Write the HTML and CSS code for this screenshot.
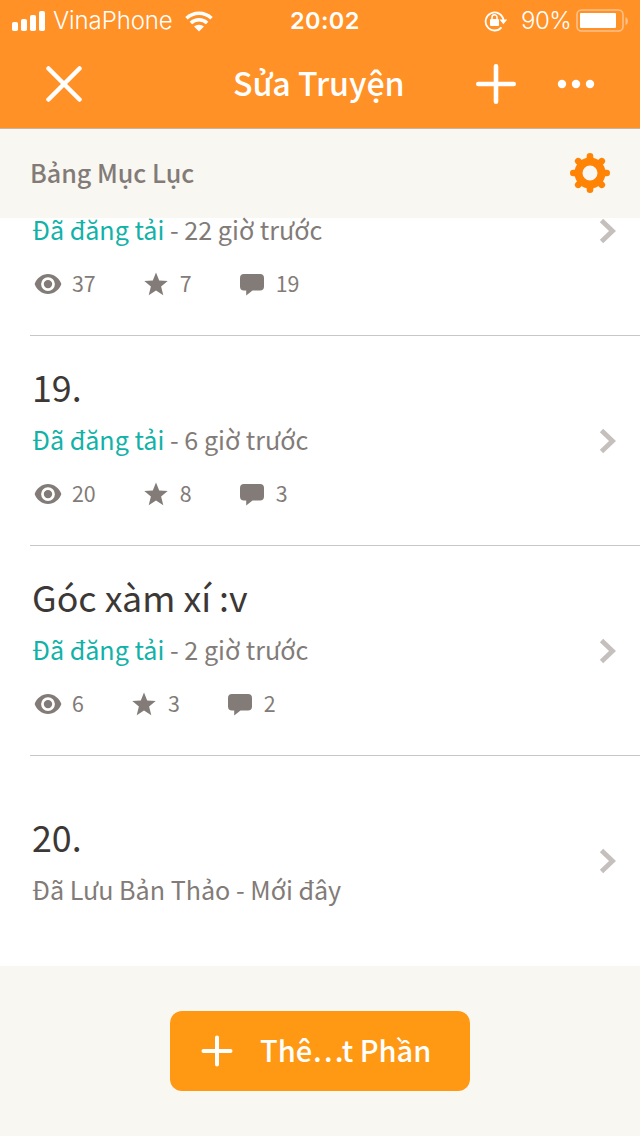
FILE: index.html
```html
<!DOCTYPE html>
<html lang="vi">
<head>
<meta charset="utf-8">
<title>Sửa Truyện</title>
<link rel="stylesheet" href="styles.css">
</head>
<body>
<svg class="defs" width="0" height="0" aria-hidden="true">
  <symbol id="eye" viewBox="0 0 28 22"><path fill-rule="evenodd" d="M14 1C8 1 3.200 5 .9 10.200q-.4.8 0 1.600C3.200 17 8 21 14 21s10.800-4 13.100-9.200q.4-.8 0-1.600C24.800 5 20 1 14 1Zm0 3.200a6.900 6.900 0 1 1 0 13.800a6.900 6.900 0 1 1 0-13.800Zm0 2.700a4.200 4.200 0 1 0 0 8.400a4.200 4.200 0 1 0 0-8.400Z"/></symbol>
  <symbol id="star" viewBox="0 0 24 24"><path d="M12 .5l3.200 8.100 8.500.4-6.600 5.500 2.200 8.700L12 18.400l-7.300 4.800 2.200-8.700L.3 9l8.500-.4Z"/></symbol>
  <symbol id="comment" viewBox="0 0 24 22"><path d="M4 0H20Q24 0 24 4V12.500Q24 16.500 20 16.500H12.500L6.200 21.500V16.500H4Q0 16.500 0 12.500V4Q0 0 4 0Z"/></symbol>
  <symbol id="chevron" viewBox="0 0 18 26"><path d="M2.500 2.500L13.500 13L2.500 23.500" fill="none" stroke="#c5c0bd" stroke-width="4.800"/></symbol>
</svg>
<div class="screen">
  <header class="header">
    <div class="statusbar">
      <div class="carrier">
        <svg width="34" height="20" viewBox="0 0 34 20"><rect y="11" width="6" height="9" rx="1.800"/><rect x="9" y="8" width="6" height="12" rx="1.800"/><rect x="18" y="4" width="6" height="16" rx="1.800"/><rect x="27" width="6" height="20" rx="1.800"/></svg>
        <span class="carrier-name">VinaPhone</span>
        <svg class="wifi" width="28" height="21" viewBox="0 0 28 21"><path d="M1.500 7.200A18 18 0 0 1 26.500 7.200M5.900 12A11.700 11.700 0 0 1 22.100 12" fill="none" stroke="#fff" stroke-width="3.500"/><path d="M14 20.500L9 15.600A7.500 7.500 0 0 1 19 15.600Z"/></svg>
      </div>
      <div class="clock">20:02</div>
      <div class="power">
        <svg class="lock" width="24" height="22" viewBox="0 0 24 22"><path d="M17.500 17.300A9 9 0 1 1 19.500 10" fill="none" stroke="#fff" stroke-width="1.800"/><path d="M15.500 9.500H23.200L19.400 14.200Z"/><rect x="6" y="9" width="9" height="7" rx="1"/><path d="M8 10V7.200a2.500 2.500 0 0 1 5 0V10" fill="none" stroke="#fff" stroke-width="1.500"/></svg>
        <span class="percent">90%</span>
        <svg width="54" height="24" viewBox="0 0 54 24"><rect x="2" y="1" width="46" height="21" rx="4.500" fill="none" stroke="#ffc18b" stroke-width="1.600"/><rect x="5" y="4" width="36" height="15" rx="1"/><path d="M50.500 8q2.500 1 2.500 4t-2.500 4Z" fill="#ffc18b"/></svg>
      </div>
    </div>
    <nav class="navbar">
      <svg class="close" width="36" height="36" viewBox="0 0 36 36"><path d="M2.500 2.500L33.500 33.500M33.500 2.500L2.500 33.500" fill="none" stroke="#fff" stroke-width="4.500" stroke-linecap="round"/></svg>
      <h1 class="title">Sửa Truyện</h1>
      <svg class="add" width="40" height="40" viewBox="0 0 40 40"><path d="M20 2.300V37.700M2.300 20H37.700" fill="none" stroke="#fff" stroke-width="4.600" stroke-linecap="round"/></svg>
      <svg class="more" width="38" height="10" viewBox="0 0 38 10"><circle cx="5" cy="5" r="4.200"/><circle cx="19" cy="5" r="4.200"/><circle cx="33" cy="5" r="4.200"/></svg>
    </nav>
  </header>
  <div class="section">
    <h2 class="section-title">Bảng Mục Lục</h2>
    <svg class="gear" width="40" height="40" viewBox="-20 -20 40 40">
      <path d="M0-13V-16.700M0 13V16.700M-13 0H-16.700M13 0H16.700M9-9L11.800-11.800M-9-9L-11.800-11.800M9 9L11.800 11.800M-9 9L-11.800 11.800" stroke="#ff8305" stroke-width="6.600" stroke-linecap="round"/>
      <circle r="11.500" fill="none" stroke="#ff8305" stroke-width="8"/>
    </svg>
  </div>
  <main class="list">
    <article class="row row-cut">
      <div class="info">
        <p class="status"><span class="published">Đã đăng tải</span> - 22 giờ trước</p>
        <div class="stats"><svg class="eye"><use href="#eye"/></svg><span>37</span><svg class="star"><use href="#star"/></svg><span>7</span><svg class="comment"><use href="#comment"/></svg><span>19</span></div>
      </div>
      <svg class="chevron"><use href="#chevron"/></svg>
    </article>
    <article class="row">
      <div class="info">
        <h3 class="name">19.</h3>
        <p class="status"><span class="published">Đã đăng tải</span> - 6 giờ trước</p>
        <div class="stats"><svg class="eye"><use href="#eye"/></svg><span>20</span><svg class="star"><use href="#star"/></svg><span>8</span><svg class="comment"><use href="#comment"/></svg><span>3</span></div>
      </div>
      <svg class="chevron"><use href="#chevron"/></svg>
    </article>
    <article class="row">
      <div class="info">
        <h3 class="name">Góc xàm xí :v</h3>
        <p class="status"><span class="published">Đã đăng tải</span> - 2 giờ trước</p>
        <div class="stats"><svg class="eye"><use href="#eye"/></svg><span>6</span><svg class="star"><use href="#star"/></svg><span>3</span><svg class="comment"><use href="#comment"/></svg><span>2</span></div>
      </div>
      <svg class="chevron"><use href="#chevron"/></svg>
    </article>
    <article class="row row-draft">
      <div class="info">
        <h3 class="name">20.</h3>
        <p class="status">Đã Lưu Bản Thảo - Mới đây</p>
      </div>
      <svg class="chevron"><use href="#chevron"/></svg>
    </article>
  </main>
  <footer class="footer">
    <button class="new-part"><svg width="32" height="32" viewBox="0 0 32 32"><path d="M16 2.500V29.500M2.500 16H29.500" fill="none" stroke="#fff" stroke-width="4" stroke-linecap="round"/></svg><span>Thê…t Phần</span></button>
  </footer>
</div>
</body>
</html>
```
FILE: styles.css
```css
* { box-sizing: border-box; margin: 0; padding: 0; }
body { font-family: "Noto Sans CJK SC", "Noto Sans", sans-serif; background: #fff; }
svg { display: block; flex: none; fill: #fff; }
.defs { position: absolute; }
.screen { width: 640px; height: 1136px; display: flex; flex-direction: column; overflow: hidden; white-space: nowrap; }

.header { height: 129px; flex: none; background: #ff9126; color: #fff; border-bottom: 1px solid #c9b59f; }
.statusbar { height: 40px; display: grid; grid-template-columns: 278px 70px 1fr; align-items: center; padding: 1px 11px 0 12px; font-family: Inter, "Liberation Sans", sans-serif; font-size: 24px; line-height: 40px; }
.carrier, .power { display: flex; align-items: center; }
.carrier-name { width: 120px; margin-left: 7px; letter-spacing: -.1px; font-weight: 300; }
.wifi { margin-left: 12px; }
.clock { font-size: 23.500px; font-weight: 600; letter-spacing: .4px; }
.power { justify-content: flex-end; }
.percent { width: 50px; margin: 0 4px 0 13px; font-weight: 300; letter-spacing: -.5px; }
.navbar { height: 88px; display: flex; align-items: center; padding-left: 46px; }
.title { width: 172px; margin-left: 151px; font-size: 32.200px; line-height: 84px; padding-bottom: 4px; font-weight: 500; }
.add { margin-left: 71px; }
.more { margin-left: 41px; }

.section { height: 89px; flex: none; background: #f9f7f2; display: flex; align-items: center; justify-content: space-between; padding: 0 30px 1px; }
.section-title { font-size: 25.100px; line-height: 40px; padding-bottom: 2px; font-weight: 500; color: #827b78; }

.list { height: 748px; flex: none; padding-left: 30px; }
.row { height: 210px; display: flex; align-items: center; justify-content: space-between; padding: 0 23px 0 2px; border-bottom: 1px solid #c8c7c6; }
.row-cut { height: 118px; align-items: flex-start; }
.row-draft { border-bottom: 0; }
.name { font-size: 35.800px; line-height: 50px; padding-bottom: 2px; font-weight: 400; color: #3c3835; }
.status { font-size: 25.120px; line-height: 52px; color: #827b78; padding-bottom: 2px; }
.row-cut .status { margin-top: -15px; }
.row-draft .info { padding-top: 6px; }
.stats { height: 54px; display: flex; align-items: center; font-size: 21.400px; line-height: 52px; color: #827b78; }
.published { color: #12b2a8; }
.stats span { padding-bottom: 1px; }
.row-cut .stats span { padding-bottom: 3px; }
.stats svg { fill: #827b78; }
.eye { width: 28px; height: 22px; margin: 0 10px 0 2px; }
.star { width: 24px; height: 24px; margin: 0 12px 0 48px; }
.comment { width: 24px; height: 22px; margin: 2px 12px 0 48px; }
.chevron { width: 18px; height: 26px; }

.footer { flex: 1; background: #f9f7f2; display: flex; justify-content: center; align-items: flex-start; padding-top: 45px; }
.new-part { width: 300px; height: 80px; border: 0; border-radius: 12px; background: #ff9914; color: #fff; font: 500 29px/76px "Noto Sans CJK SC", "Noto Sans", sans-serif; display: flex; align-items: center; padding-left: 31px; white-space: nowrap; }
.new-part span { margin-left: 27px; padding-bottom: 4px; }
```
